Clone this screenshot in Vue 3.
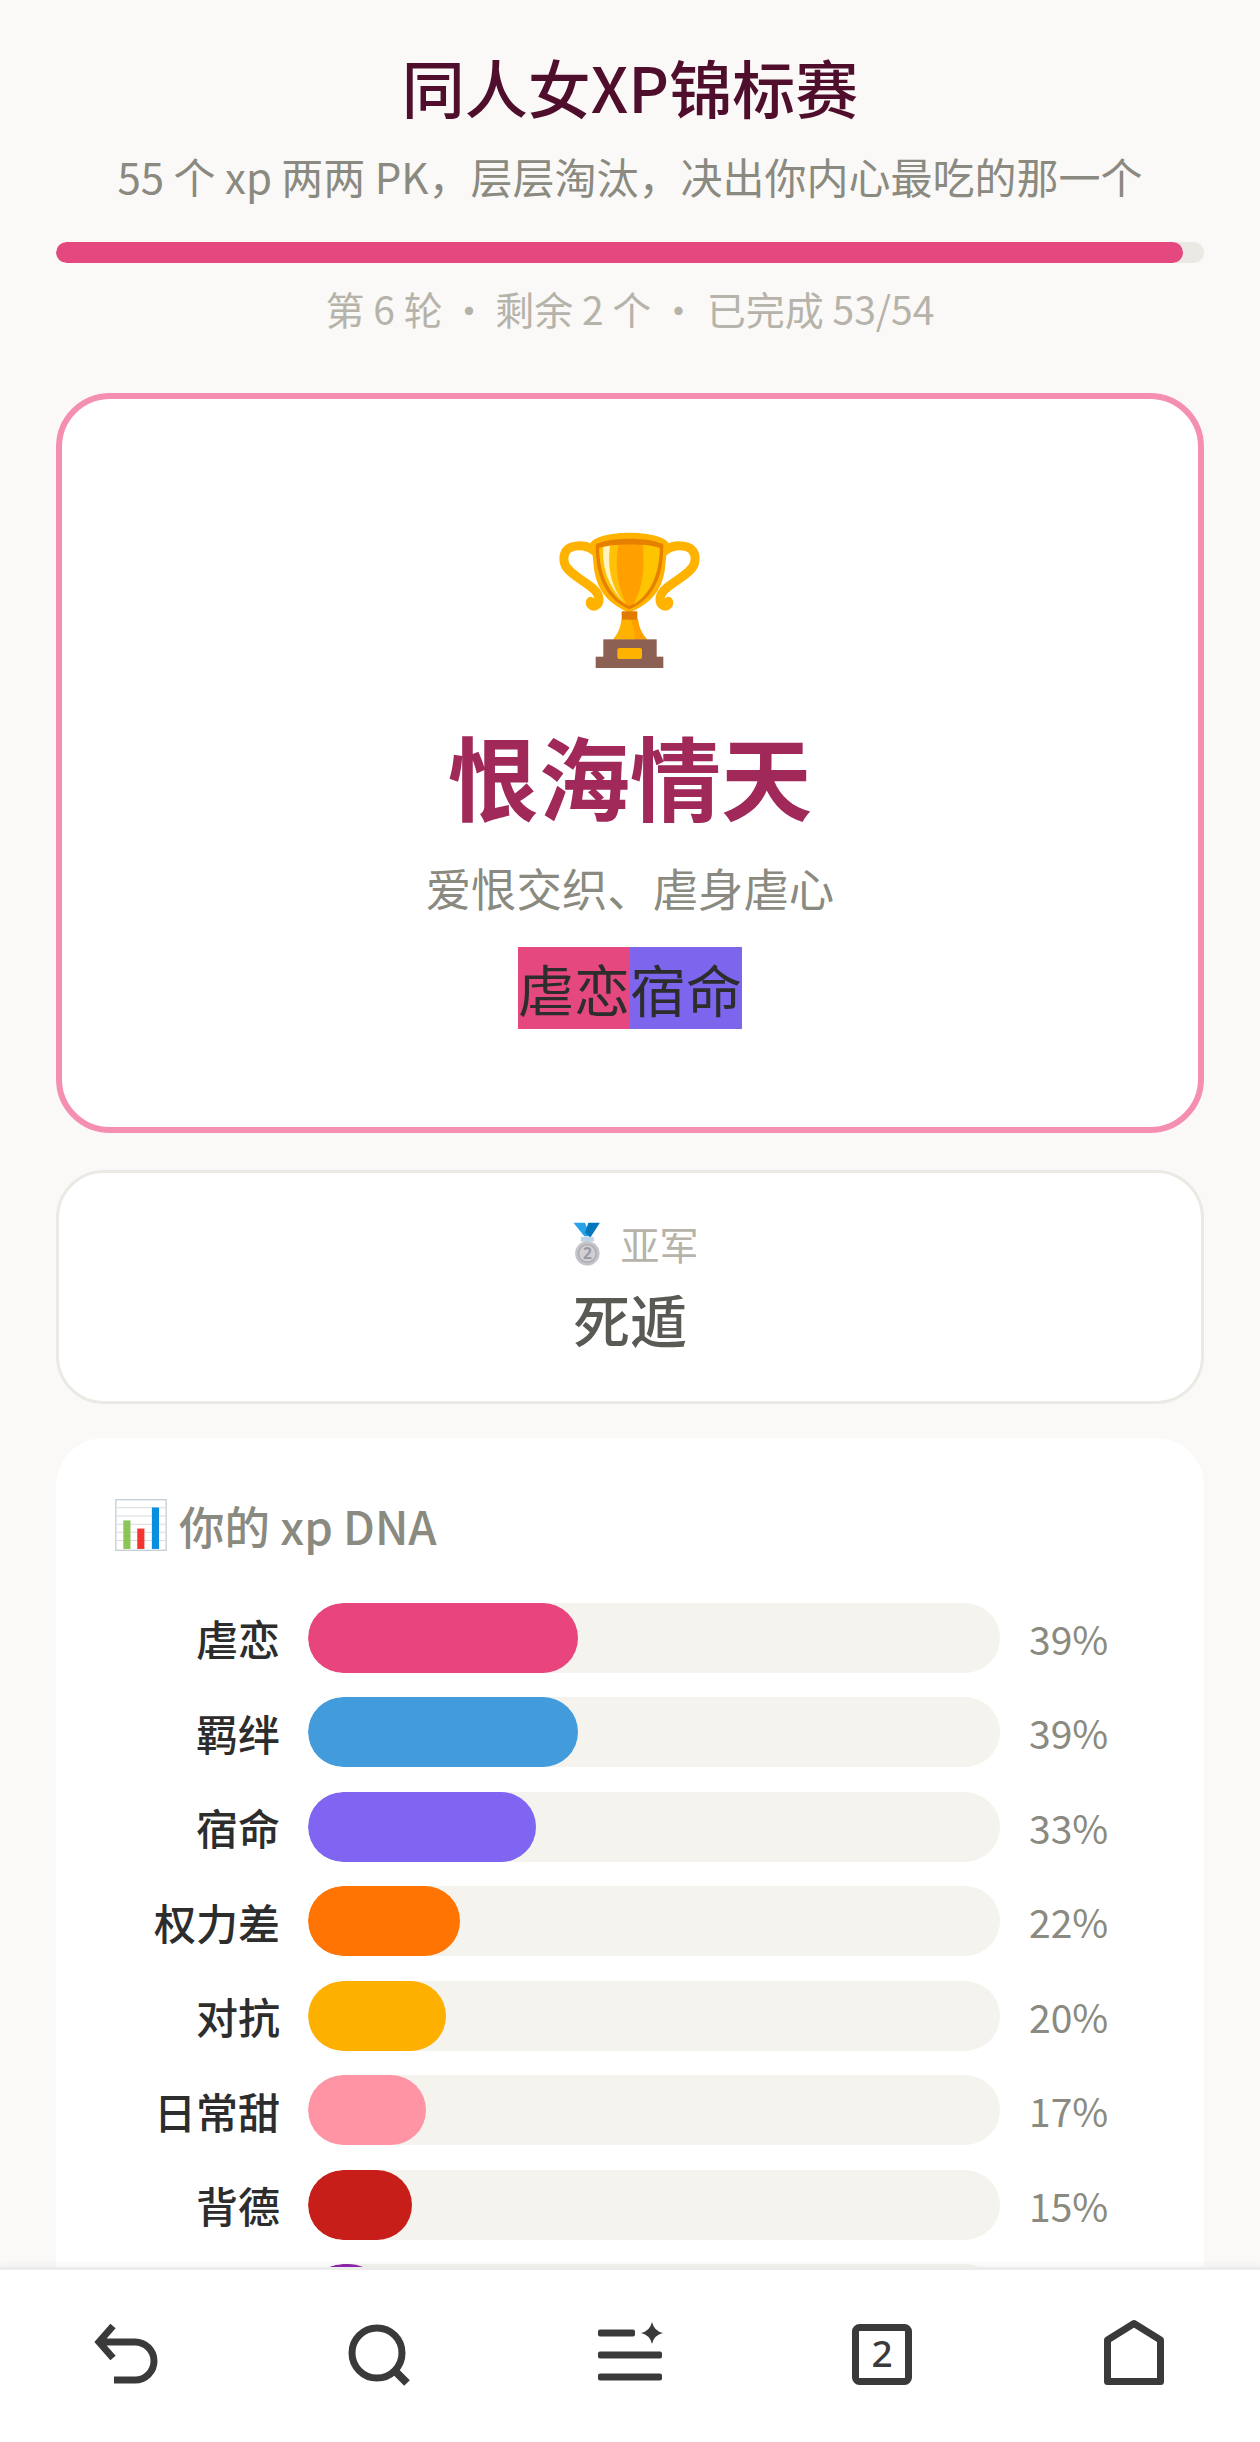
<script setup>
const rows = [
  { name: '虐恋', pct: 39, color: '#e8457e' },
  { name: '羁绊', pct: 39, color: '#429cdc' },
  { name: '宿命', pct: 33, color: '#8065f3' },
  { name: '权力差', pct: 22, color: '#ff7402' },
  { name: '对抗', pct: 20, color: '#fdb000' },
  { name: '日常甜', pct: 17, color: '#ff94a4' },
  { name: '背德', pct: 15, color: '#c81e19' },
  { name: '', pct: 11, color: '#8e24aa' }
]
</script>

<template>
  <div class="page">
    <main class="main">
      <header class="head">
        <h1 class="title">同人女XP锦标赛</h1>
        <p class="sub">55 个 xp 两两 PK，层层淘汰，决出你内心最吃的那一个</p>
        <div class="progress"><div class="progress-fill"></div></div>
        <p class="round">第 6 轮 <span class="dot">・</span> 剩余 2 个 <span class="dot dot-b">・</span> 已完成 53/54</p>
      </header>

      <section class="winner">
        <svg class="trophy" viewBox="0 0 480 465">
          <g fill="none" stroke="#ffb300" stroke-width="27" stroke-linecap="round">
            <path d="M135 88C115 70 85 68 65 75C43 82 38 105 44 125C53 155 110 180 135 205C150 222 152 245 135 252C125 255 118 245 122 238"/>
            <path d="M342 88C362 70 392 68 412 75C434 82 439 105 433 125C424 155 367 180 342 205C327 222 325 245 342 252C352 255 359 245 355 238"/>
          </g>
          <path d="M122 62C150 22 327 22 355 62C350 85 347 120 345 140C335 215 290 250 238 272C187 250 142 215 132 140C130 120 127 85 122 62Z" fill="#ffb300"/>
          <path d="M137 68C172 44 305 44 340 68C340 150 320 225 238 262C157 225 137 150 137 68Z" fill="#e68100"/>
          <path d="M148 78C185 64 292 64 329 78C329 150 304 217 238 253C173 217 148 150 148 78Z" fill="#ffa000"/>
          <path d="M148 78C165 72 190 69 205 68C195 130 200 190 230 248C173 217 148 150 148 78Z" fill="#ffc107"/>
          <path d="M160 75L180 71C172 130 180 190 222 243C173 190 155 135 160 75Z" fill="#fff3c4"/>
          <path d="M278 68C295 69 315 73 329 78C329 150 304 217 250 248C280 195 285 130 278 68Z" fill="#ffc400"/>
          <path d="M214 292C212 315 205 335 188 353H292C275 335 266 315 264 292Z" fill="#ffb300"/>
          <path d="M242 292H264C266 315 275 335 292 353H252C258 330 248 310 242 292Z" fill="#ffa000"/>
          <rect x="215" y="268" width="47" height="25" rx="3" fill="#e07b00"/>
          <rect x="160" y="352" width="160" height="54" fill="#8d6054"/>
          <rect x="137" y="404" width="203" height="34" fill="#8d6054"/>
          <rect x="202" y="378" width="74" height="33" rx="6" fill="#ffb300"/>
        </svg>
        <h2 class="winner-name">恨海情天</h2>
        <p class="winner-desc">爱恨交织、虐身虐心</p>
        <div class="tags"><span class="tag tag-a">虐恋</span><span class="tag tag-b">宿命</span></div>
      </section>

      <section class="runner">
        <div class="runner-label">
          <svg class="medal" viewBox="70 40 80 130">
            <path d="M70 42H104L120 82H102Z" fill="#29a3e8"/>
            <path d="M148 42H114L104 72L120 86Z" fill="#0277bd"/>
            <rect x="92" y="84" width="38" height="14" fill="#bcd4e6"/>
            <circle cx="111" cy="133" r="36" fill="#c4c4c8"/>
            <circle cx="111" cy="133" r="26" fill="#cfcfd4" stroke="#a9a9af" stroke-width="4"/>
            <text x="111" y="149" text-anchor="middle" class="medal-num">2</text>
          </svg>
          <span>亚军</span>
        </div>
        <div class="runner-name">死遁</div>
      </section>

      <section class="dna">
        <div class="dna-title">
          <svg class="chart" viewBox="45 75 152 153">
            <rect x="47" y="77" width="148" height="149" fill="#fff" stroke="#c5d0d6" stroke-width="4"/>
            <path d="M47 101H195M47 125H195M47 149H195M47 173H195M47 197H195" stroke="#d5dce0" stroke-width="3"/>
            <rect x="69" y="138" width="21" height="84" fill="#8bc556"/>
            <rect x="110" y="162" width="21" height="60" fill="#f4352f"/>
            <rect x="153" y="100" width="21" height="122" fill="#0a8ee0"/>
          </svg>
          <span>你的 xp DNA</span>
        </div>
        <div v-for="(r, i) in rows" :key="i" class="row">
          <div class="row-name">{{ r.name }}</div>
          <div class="track">
            <div class="fill" :style="{ width: r.pct + '%', background: r.color }"></div>
          </div>
          <div class="row-val">{{ r.name ? r.pct + '%' : '' }}</div>
        </div>
      </section>
    </main>

    <nav class="nav">
      <div class="nav-cell nudge-a">
        <svg class="ico" viewBox="0 0 72 72"><path d="M22 9L8 25L22 41M8 25H44a19 19 0 0 1 0 38H23" fill="none" stroke="#3a3a3a" stroke-width="7"/></svg>
      </div>
      <div class="nav-cell">
        <svg class="ico" viewBox="0 0 72 72"><circle cx="35" cy="36" r="25" fill="none" stroke="#3a3a3a" stroke-width="7"/><path d="M53 54L65 66" stroke="#3a3a3a" stroke-width="8"/></svg>
      </div>
      <div class="nav-cell nudge-a">
        <svg class="ico" viewBox="0 0 72 72">
          <rect x="3" y="12.5" width="37" height="7" rx="2" fill="#3a3a3a"/>
          <rect x="3" y="34.5" width="64" height="7" rx="2" fill="#3a3a3a"/>
          <rect x="3" y="56.5" width="64" height="7" rx="2" fill="#3a3a3a"/>
          <path d="M57 5Q59 14 68 16Q59 18 57 27Q55 18 46 16Q55 14 57 5Z" fill="#3a3a3a"/>
        </svg>
      </div>
      <div class="nav-cell">
        <svg class="ico" viewBox="0 0 72 72">
          <rect x="9.5" y="10.5" width="53" height="54" rx="4" fill="none" stroke="#3a3a3a" stroke-width="7"/>
          <text x="36" y="50" text-anchor="middle" class="tab-num">2</text>
        </svg>
      </div>
      <div class="nav-cell">
        <svg class="ico" viewBox="0 0 72 72"><path d="M9.5 23L36 6.5L62.5 23V64.5H9.5Z" fill="none" stroke="#3a3a3a" stroke-width="7" stroke-linejoin="round"/></svg>
      </div>
    </nav>
  </div>
</template>

<style>
html, body { margin: 0; padding: 0; }
</style>

<style scoped>
.page {
  width: 1260px;
  height: 2442px;
  display: flex;
  flex-direction: column;
  overflow: hidden;
  background: #fbf9f7;
  font-family: "Noto Sans CJK SC", "Noto Sans", sans-serif;
}
.main {
  flex: 1;
  min-height: 0;
  overflow: hidden;
  padding: 0 56px;
}
.head { text-align: center; padding-top: 41px; }
.title {
  margin: 0;
  font-size: 63px;
  line-height: 90px;
  font-weight: 500;
  color: #4f0f2c;
}
.sub {
  margin: 15px 0 0;
  font-size: 42px;
  line-height: 60px;
  color: #8a8a80;
}
.progress {
  margin-top: 35.5px;
  height: 21px;
  border-radius: 11px;
  background: #ebe9e3;
  overflow: hidden;
}
.progress-fill {
  width: 98.15%;
  height: 100%;
  border-radius: 11px;
  background: #e5487f;
}
.round {
  margin: 18.5px 0 0;
  font-size: 39px;
  line-height: 54px;
  color: #b5b3aa;
}
.dot { margin: 0 -2px; }
.dot-b { margin: 0 0 0 -1px; }
.winner {
  margin-top: 57.5px;
  box-sizing: border-box;
  height: 740px;
  border: 6px solid #f48fb1;
  border-radius: 54px;
  background: #fff;
  display: flex;
  flex-direction: column;
  align-items: center;
  padding-top: 123.5px;
}
.trophy { width: 160px; height: 155px; display: block; flex: none; }
.winner-name {
  margin: 32px 0 0;
  font-size: 91px;
  line-height: 130px;
  font-weight: 700;
  color: #a0295a;
}
.winner-desc {
  margin: 14.5px 0 0;
  font-size: 45.4px;
  line-height: 66px;
  color: #8a8a80;
}
.tags { display: flex; margin-top: 27.5px; }
.tag {
  font-size: 56px;
  line-height: 82px;
  color: #2d2d2d;
}
.tag-a { background: #e5487f; }
.tag-b { background: #7d65ee; }
.runner {
  margin-top: 37px;
  box-sizing: border-box;
  height: 234px;
  border: 3px solid #ebe9e3;
  border-radius: 48px;
  background: #fff;
  text-align: center;
  padding-top: 42px;
}
.runner-label {
  display: flex;
  justify-content: center;
  align-items: center;
  gap: 19px;
  font-size: 39px;
  line-height: 56px;
  color: #b5b3aa;
}
.medal { width: 28px; height: 44px; display: block; margin: 2px 0 0 12px; }
.medal-num { font-size: 46px; font-weight: 700; fill: #9a9aa0; font-family: "Noto Sans", sans-serif; }
.runner-name {
  margin-top: 8.5px;
  font-size: 57px;
  line-height: 78px;
  font-weight: 500;
  color: #5a5a55;
}
.dna {
  margin-top: 34px;
  background: #fff;
  border-radius: 48px 48px 0 0;
  padding: 54.5px 56px 0;
  height: 1000px;
}
.dna-title {
  display: flex;
  align-items: center;
  gap: 12px;
  font-size: 45.5px;
  line-height: 66px;
  font-weight: 500;
  color: #8a8a80;
  margin-bottom: 44.5px;
  margin-left: 3px;
}
.chart { width: 52px; height: 52px; display: block; }
.row {
  display: flex;
  align-items: center;
  height: 70px;
  margin-bottom: 24.5px;
  margin-left: -112px;
  margin-right: -56px;
}
.row-name {
  width: 280px;
  flex: none;
  text-align: right;
  font-size: 42px;
  font-weight: 500;
  color: #2d2d2d;
}
.track {
  margin-left: 28px;
  width: 692px;
  flex: none;
  height: 70px;
  border-radius: 35px;
  background: #f4f3ee;
  overflow: hidden;
}
.fill { height: 100%; border-radius: 35px; }
.row-val {
  margin-left: 29px;
  font-size: 39px;
  color: #8a8a80;
}
.nav {
  position: relative;
  flex: none;
  box-sizing: border-box;
  height: 175px;
  border-top: 3px solid #ececec;
  background: #fff;
  display: flex;
  padding-top: 47px;
  box-shadow: 0 -3px 6px rgba(0, 0, 0, 0.04);
}
.nav-cell { width: 252px; display: flex; justify-content: center; align-items: flex-start; }
.nudge-a { padding-left: 2px; box-sizing: border-box; }
.ico { width: 72px; height: 72px; display: block; overflow: visible; }
.tab-num { font-size: 37px; font-weight: 500; fill: #3a3a3a; font-family: "Noto Sans", sans-serif; }
</style>
